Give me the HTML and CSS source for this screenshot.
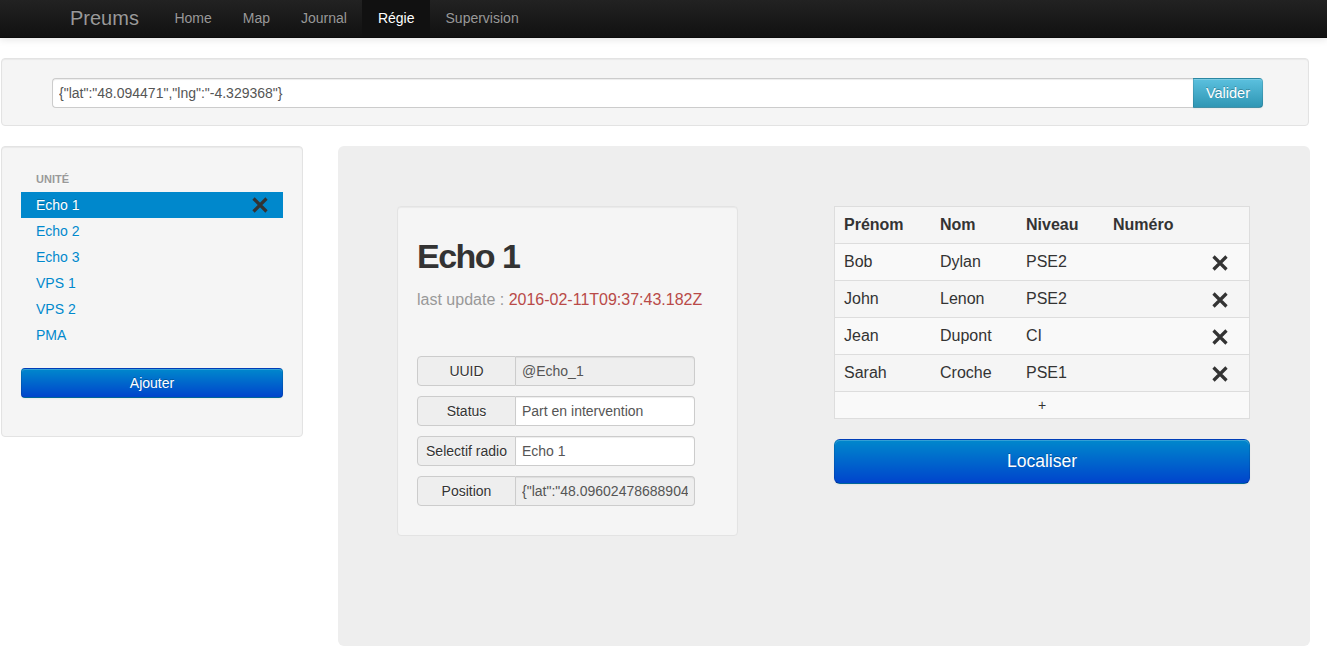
FILE: index.html
```html
<!DOCTYPE html>
<html lang="fr">
<head>
<meta charset="utf-8">
<title>Preums - Régie</title>
<link rel="stylesheet" href="styles.css">
</head>
<body>
<header class="navbar">
  <a class="brand" href="#">Preums</a>
  <ul class="nav">
    <li><a href="#">Home</a></li>
    <li><a href="#">Map</a></li>
    <li><a href="#">Journal</a></li>
    <li class="active"><a href="#">Régie</a></li>
    <li><a href="#">Supervision</a></li>
  </ul>
</header>
<main class="page">
  <section class="well search">
    <div class="input-append">
      <input class="search-input" type="text" value='{"lat":"48.094471","lng":"-4.329368"}'>
      <button class="btn btn-info" type="button">Valider</button>
    </div>
  </section>
  <div class="layout">
    <aside class="well sidebar">
      <ul class="nav-list">
        <li class="nav-header">Unité</li>
        <li class="active"><a href="#"><span>Echo 1</span><span class="close"><svg width="18" height="18" viewBox="0 0 18 18"><path d="M2.5 2.5 L15.5 15.5 M15.5 2.5 L2.5 15.5" stroke="#333" stroke-width="3.2" fill="none"/></svg></span></a></li>
        <li><a href="#">Echo 2</a></li>
        <li><a href="#">Echo 3</a></li>
        <li><a href="#">VPS 1</a></li>
        <li><a href="#">VPS 2</a></li>
        <li><a href="#">PMA</a></li>
      </ul>
      <div class="sidebar-actions">
        <button class="btn btn-primary btn-block" type="button">Ajouter</button>
      </div>
    </aside>
    <section class="hero">
      <div class="hero-row">
        <div class="well card">
          <h1 class="unit-title">Echo 1</h1>
          <p class="muted">last update : <span class="text-error">2016-02-11T09:37:43.182Z</span></p>
          <div class="fields">
            <div class="input-prepend">
              <span class="add-on">UUID</span>
              <input class="field readonly" type="text" value="@Echo_1" readonly>
            </div>
            <div class="input-prepend">
              <span class="add-on">Status</span>
              <input class="field" type="text" value="Part en intervention">
            </div>
            <div class="input-prepend">
              <span class="add-on">Selectif radio</span>
              <input class="field" type="text" value="Echo 1">
            </div>
            <div class="input-prepend">
              <span class="add-on">Position</span>
              <input class="field readonly" type="text" value='{"lat":"48.096024786889044","lng":"-4.3301"}' readonly>
            </div>
          </div>
        </div>
        <div class="team">
          <table class="table">
            <thead>
              <tr><th class="c1">Prénom</th><th class="c2">Nom</th><th class="c3">Niveau</th><th class="c4">Numéro</th><th class="c5"></th></tr>
            </thead>
            <tbody>
              <tr><td>Bob</td><td>Dylan</td><td>PSE2</td><td></td><td class="del"><svg width="18" height="18" viewBox="0 0 18 18"><path d="M2.5 2.5 L15.5 15.5 M15.5 2.5 L2.5 15.5" stroke="#333" stroke-width="3.2" fill="none"/></svg></td></tr>
              <tr><td>John</td><td>Lenon</td><td>PSE2</td><td></td><td class="del"><svg width="18" height="18" viewBox="0 0 18 18"><path d="M2.5 2.5 L15.5 15.5 M15.5 2.5 L2.5 15.5" stroke="#333" stroke-width="3.2" fill="none"/></svg></td></tr>
              <tr><td>Jean</td><td>Dupont</td><td>CI</td><td></td><td class="del"><svg width="18" height="18" viewBox="0 0 18 18"><path d="M2.5 2.5 L15.5 15.5 M15.5 2.5 L2.5 15.5" stroke="#333" stroke-width="3.2" fill="none"/></svg></td></tr>
              <tr><td>Sarah</td><td>Croche</td><td>PSE1</td><td></td><td class="del"><svg width="18" height="18" viewBox="0 0 18 18"><path d="M2.5 2.5 L15.5 15.5 M15.5 2.5 L2.5 15.5" stroke="#333" stroke-width="3.2" fill="none"/></svg></td></tr>
              <tr class="add-row"><td colspan="5">+</td></tr>
            </tbody>
          </table>
          <button class="btn btn-primary btn-large btn-block" type="button">Localiser</button>
        </div>
      </div>
    </section>
  </div>
</main>
</body>
</html>
```
FILE: styles.css
```css
* { box-sizing: border-box; }

html, body {
  margin: 0;
  padding: 0;
  background: #fff;
}

body {
  font-family: "Liberation Sans", Arial, Helvetica, sans-serif;
  font-size: 14px;
  line-height: 20px;
  color: #333;
}

a { text-decoration: none; }

/* ---------- navbar ---------- */
.navbar {
  display: flex;
  align-items: stretch;
  height: 38px;
  padding-left: 50px;
  background: linear-gradient(to bottom, #222 0%, #111 100%);
  border-bottom: 1px solid #0c0c0c;
  box-shadow: 0 1px 8px rgba(0, 0, 0, 0.12);
}

.brand {
  display: block;
  padding: 8px 20px 9px 20px;
  font-size: 20px;
  line-height: 20px;
  color: #999;
  text-shadow: 0 -1px 0 rgba(0, 0, 0, 0.25);
}

.nav {
  display: flex;
  margin: 0;
  padding: 0;
  list-style: none;
}

.nav li a {
  display: block;
  padding: 8px 15.5px 9px;
  line-height: 20px;
  color: #999;
  text-shadow: 0 -1px 0 rgba(0, 0, 0, 0.25);
}

.nav li.active a {
  color: #fff;
  background: #111;
}

/* ---------- layout ---------- */
.page {
  margin: 20px 18px 0 1px;
}

.well {
  background: #f5f5f5;
  border: 1px solid #e3e3e3;
  border-radius: 4px;
  box-shadow: inset 0 1px 1px rgba(0, 0, 0, 0.05);
}

.search {
  padding: 19px 45px 17px 50px;
}

.input-append {
  display: flex;
}

.search-input {
  flex: 1;
  height: 30px;
  margin: 0;
  padding: 4px 6px;
  font-family: inherit;
  font-size: 14px;
  color: #555;
  background: #fff;
  border: 1px solid #ccc;
  border-right: 0;
  border-radius: 4px 0 0 4px;
  box-shadow: inset 0 1px 1px rgba(0, 0, 0, 0.075);
}

.btn {
  display: inline-block;
  margin: 0;
  padding: 4px 12px;
  font-family: inherit;
  font-size: 14px;
  line-height: 20px;
  text-align: center;
  cursor: pointer;
  border: 1px solid rgba(0, 0, 0, 0.1);
  border-bottom-color: rgba(0, 0, 0, 0.25);
  border-radius: 4px;
  box-shadow: inset 0 1px 0 rgba(255, 255, 255, 0.2), 0 1px 2px rgba(0, 0, 0, 0.05);
}

.btn-info {
  color: #fff;
  text-shadow: 0 -1px 0 rgba(0, 0, 0, 0.25);
  background: linear-gradient(to bottom, #5bc0de, #2f96b4);
  border-radius: 0 4px 4px 0;
  height: 30px;
  font-size: 14.5px;
}

.btn-primary {
  color: #fff;
  text-shadow: 0 -1px 0 rgba(0, 0, 0, 0.25);
  background: linear-gradient(to bottom, #0088cc, #0044cc);
}

.btn-block {
  display: block;
  width: 100%;
}

.btn-large {
  padding: 11px 19px 12px;
  font-size: 17.5px;
  border-radius: 6px;
}

.layout {
  display: grid;
  grid-template-columns: 302px 1fr;
  column-gap: 35px;
  align-items: start;
  margin-top: 20px;
}

/* ---------- sidebar ---------- */
.sidebar {
  padding: 19px;
}

.nav-list {
  margin: 0 0 20px;
  padding: 0;
  list-style: none;
}

.nav-header {
  padding: 3px 15px;
  font-size: 11px;
  font-weight: bold;
  line-height: 20px;
  color: #999;
  text-transform: uppercase;
  text-shadow: 0 1px 0 rgba(255, 255, 255, 0.5);
}

.nav-list li a {
  display: flex;
  justify-content: space-between;
  align-items: center;
  padding: 3px 15px;
  line-height: 20px;
  color: #0088cc;
  text-shadow: 0 1px 0 rgba(255, 255, 255, 0.5);
}

.nav-list li.active a {
  color: #fff;
  background: #0088cc;
  text-shadow: 0 -1px 0 rgba(0, 0, 0, 0.2);
}

.close {
  display: flex;
  margin-right: -1px;
}

.sidebar-actions {
  margin-bottom: 19px;
}

/* ---------- hero ---------- */
.hero {
  background: #eee;
  border-radius: 6px;
  padding: 60px 60px 110px 60px;
}

.hero-row {
  display: flex;
  align-items: flex-start;
}

.card {
  width: 341px;
  margin-left: -1px;
  padding: 19px 19px 29px;
}

.unit-title {
  margin: 10px 0 14px;
  font-size: 34px;
  letter-spacing: -1.5px;
  line-height: 40px;
  font-weight: bold;
  color: #333;
}

.muted {
  margin: 0 0 46px;
  font-size: 16px;
  color: #999;
}

.text-error {
  color: #b94a48;
}

.fields {
  display: flex;
  flex-direction: column;
  gap: 10px;
  width: 278px;
}

.input-prepend {
  display: flex;
  height: 30px;
}

.add-on {
  width: 99px;
  flex: none;
  padding: 4px 5px;
  text-align: center;
  white-space: nowrap;
  color: #333;
  background: #eee;
  border: 1px solid #ccc;
  border-radius: 4px 0 0 4px;
  text-shadow: 0 1px 0 #fff;
}

.field {
  flex: 1;
  min-width: 0;
  height: 30px;
  margin: 0;
  padding: 4px 6px;
  font-family: inherit;
  font-size: 14px;
  color: #555;
  background: #fff;
  border: 1px solid #ccc;
  border-left: 0;
  border-radius: 0 4px 4px 0;
  box-shadow: inset 0 1px 1px rgba(0, 0, 0, 0.075);
}

.field.readonly {
  background: #eee;
}

/* ---------- team table ---------- */
.team {
  width: 416px;
  margin-left: 96px;
}

.table {
  width: 100%;
  table-layout: fixed;
  border-collapse: separate;
  border-spacing: 0;
  margin-bottom: 20px;
  background: #f5f5f5;
  border: 1px solid #ddd;
  font-size: 16px;
}

.table th,
.table td {
  padding: 8px 8px 8px 9px;
  line-height: 20px;
  text-align: left;
  vertical-align: middle;
  border-top: 1px solid #ddd;
}

.table thead th {
  border-top: 0;
  font-weight: bold;
}

.table .c1 { width: 96px; }
.table .c2 { width: 86px; }
.table .c3 { width: 87px; }
.table .c4 { width: 80px; }

.table tbody tr:nth-child(odd) td {
  background: #f9f9f9;
}

.table td.del {
  padding: 8px 0;
  text-align: center;
}

.table td.del svg {
  display: block;
  margin: 1px auto 0 27px;
}

.table .add-row td {
  padding: 3px 8px;
  font-size: 14px;
  text-align: center;
  color: #333;
}
```
